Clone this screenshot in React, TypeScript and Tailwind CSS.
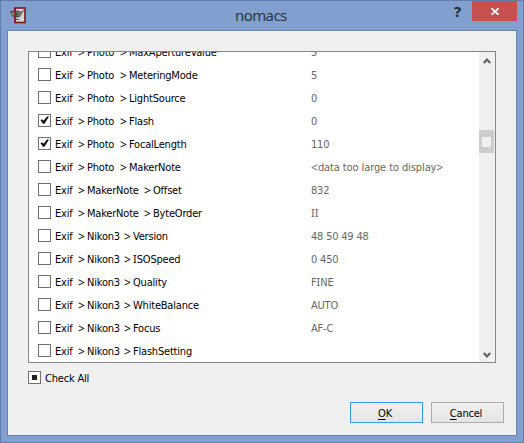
type Row = { path: string[]; value: string; checked?: boolean; width: string };

const rows: Row[] = [
  { path: ["Exif", "Photo", "MaxApertureValue"], value: "5", width: "w-[33px]" },
  { path: ["Exif", "Photo", "MeteringMode"], value: "5", width: "w-[33px]" },
  { path: ["Exif", "Photo", "LightSource"], value: "0", width: "w-[33px]" },
  { path: ["Exif", "Photo", "Flash"], value: "0", checked: true, width: "w-[33px]" },
  { path: ["Exif", "Photo", "FocalLength"], value: "110", checked: true, width: "w-[33px]" },
  { path: ["Exif", "Photo", "MakerNote"], value: "<data too large to display>", width: "w-[33px]" },
  { path: ["Exif", "MakerNote", "Offset"], value: "832", width: "w-[57px]" },
  { path: ["Exif", "MakerNote", "ByteOrder"], value: "II", width: "w-[57px]" },
  { path: ["Exif", "Nikon3", "Version"], value: "48 50 49 48", width: "w-[37px]" },
  { path: ["Exif", "Nikon3", "ISOSpeed"], value: "0 450", width: "w-[37px]" },
  { path: ["Exif", "Nikon3", "Quality"], value: "FINE", width: "w-[37px]" },
  { path: ["Exif", "Nikon3", "WhiteBalance"], value: "AUTO", width: "w-[37px]" },
  { path: ["Exif", "Nikon3", "Focus"], value: "AF-C", width: "w-[37px]" },
  { path: ["Exif", "Nikon3", "FlashSetting"], value: "", width: "w-[37px]" },
];

function Label({ text }: { text: string }) {
  return text.split(/([I<>])/).map((part, i) => {
    if (part === "I") {
      return <span key={i} className="font-[family-name:'Noto_Sans'] leading-none tracking-normal">I</span>;
    }
    if (part === "<" || part === ">") {
      return <span key={i} className="align-[-1px] font-[family-name:'Noto_Sans'] text-[12px] leading-none tracking-normal">{part}</span>;
    }
    return part;
  });
}

function Checkbox({ state }: { state?: "checked" | "partial" }) {
  return (
    <span className="flex h-[13px] w-[13px] shrink-0 items-center justify-center border border-[#707070] bg-white">
      {state === "checked" && (
        <svg width="11" height="11" viewBox="0 0 11 11" fill="#111">
          <path d="M1.5 5.2 3 4.2 4.6 5.8 8 1.5H10L5.5 8.7H4Z" />
        </svg>
      )}
      {state === "partial" && <span className="h-[5px] w-[5px] bg-[#212121]" />}
    </span>
  );
}

function AppIcon() {
  return (
    <svg width="17" height="17" viewBox="0 0 17 17" fill="none">
      <rect x="5" y="1" width="10" height="14.5" fill="#d4d5d8" stroke="#851218" strokeWidth="1.6" />
      <path d="M0 5.5C3 3.5 7 3.5 11 5.5L9 10C4.5 11 1.5 9 0 5.5Z" fill="#77806b" />
      <path d="M0 5.5C3 3.7 7 3.7 11 5.2M2 8C4 10.5 7 10.5 9 9" stroke="#3e403a" strokeWidth="1.1" />
      <circle cx="6.5" cy="7" r="1.5" fill="#3c4640" />
      <path d="M13.5 3 9 10M6 12.5H9" stroke="#555545" strokeWidth="1.2" />
      <path d="M5 1V15.5" stroke="#851218" strokeWidth="1.2" />
    </svg>
  );
}

function Chevron({ down }: { down?: boolean }) {
  return (
    <svg width="8" height="7" viewBox="0 0 8 7" fill="none" stroke="#606060" strokeWidth="2.2">
      <path d={down ? "M.7 1 4 4.5 7.3 1" : "M.7 6 4 2.5 7.3 6"} />
    </svg>
  );
}

export default function App() {
  return (
    <div className="flex h-[443px] w-[524px] flex-col border border-[#627ea8] bg-[#82a0cf] font-[family-name:'DejaVu_Sans_Condensed','DejaVu_Sans',sans-serif] text-[11px] text-black">
      <header className="flex h-[29px] shrink-0 items-start">
        <div className="ml-[9px] mt-[6px] w-[17px]"><AppIcon /></div>
        <div className="ml-[208px] mt-[4px] w-[200px] font-[family-name:'Noto_Sans','Open_Sans',sans-serif] text-[15px] leading-5 tracking-[-0.6px] text-[#2d3542]">nomacs</div>
        <div className="ml-[19px] w-[10px] font-[family-name:'Noto_Sans','Open_Sans',sans-serif] text-[15px] font-bold leading-5 text-[#202833]">?</div>
        <div className="ml-[8px] flex h-5 w-[45px] items-center justify-center bg-[#c75050]">
          <svg width="8" height="7" viewBox="0 0 8 7" stroke="white" strokeWidth="1.8"><path d="M.5 .3 7.5 6.7M7.5 .3 .5 6.7" /></svg>
        </div>
      </header>

      <main className="ml-[6px] flex h-[406px] w-[510px] shrink-0 flex-col border border-[#6684b2] bg-[#f0f0f0] pl-5 pt-5">
        <div className="flex h-[312px] w-[468px] shrink-0 border border-[#828790] bg-white">
          <div className="h-[310px] flex-1 overflow-hidden">
            <div className="-mt-[12px]">
              {rows.map((row) => (
                <div key={row.path.join(".")} className="flex h-[23px] items-center pl-[9px] tracking-[-0.2px]">
                  <Checkbox state={row.checked ? "checked" : undefined} />
                  <div className="ml-1 flex w-[256px] items-baseline whitespace-pre pt-[2px] leading-[15px]">
                    <span className="w-[23px]">{row.path[0]}</span>
                    <span className="w-[9px]"><Label text=">" /></span>
                    <span className={row.width}>{row.path[1]}</span>
                    <span className="w-[9px]"><Label text=">" /></span>
                    <span><Label text={row.path[2]} /></span>
                  </div>
                  <span className={`whitespace-nowrap pt-[2px] leading-[15px] text-[#666666] ${row.value.startsWith("<") ? "tracking-[-0.1px]" : ""}`}><Label text={row.value} /></span>
                </div>
              ))}
            </div>
          </div>
          <div className="flex w-[15px] flex-col items-center bg-[#f0f0f0]">
            <div className="flex h-[78px] items-start pt-[5px]"><Chevron /></div>
            <div className="flex h-[23px] w-full items-center justify-center bg-[#cdcdcd]"><div className="h-[10px] w-[9px] bg-[#f0f0f0]" /></div>
            <div className="flex flex-1 items-end pb-[3px]"><Chevron down /></div>
          </div>
          <div className="w-px bg-[#f0f0f0]" />
        </div>

        <div className="mt-[8px] flex h-[13px] items-center gap-1">
          <Checkbox state="partial" />
          <span className="pt-[2px] leading-[15px] tracking-[-0.2px]">Check All</span>
        </div>

        <div className="ml-[322px] mt-[18px] flex gap-2 tracking-[-0.2px]">
          <button className="h-[21px] w-[73px] border border-[#3399ff] bg-linear-to-b from-[#f0f0f0] to-[#e5e5e5] pr-[3px] pt-[2px] leading-[17px]"><span className="underline underline-offset-2">O</span>K</button>
          <button className="h-[21px] w-[73px] border border-[#acacac] bg-linear-to-b from-[#f0f0f0] to-[#e5e5e5] pr-[3px] pt-[2px] leading-[17px]"><span className="underline underline-offset-2">C</span>ancel</button>
        </div>
      </main>
    </div>
  );
}
